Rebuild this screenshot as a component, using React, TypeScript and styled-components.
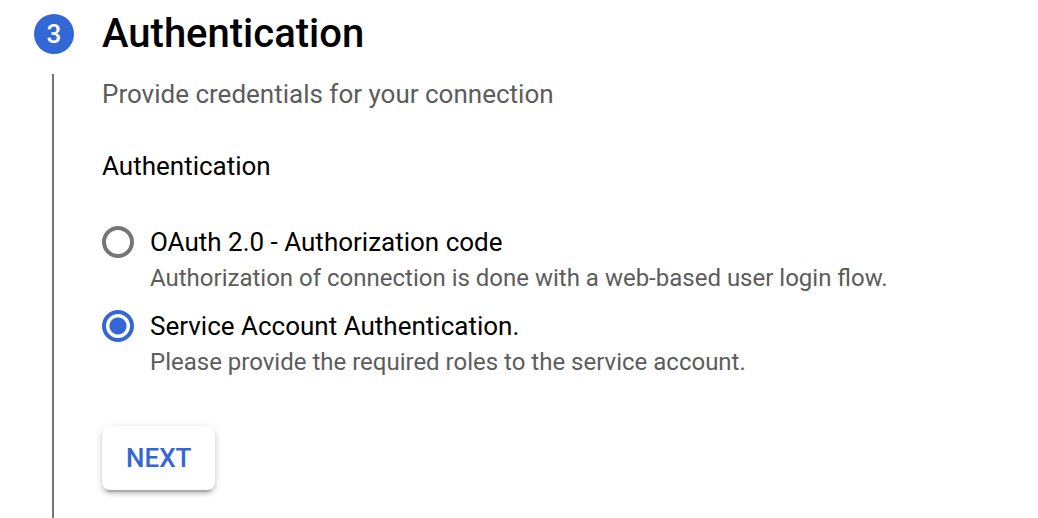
import React from "react";
import styled, { createGlobalStyle } from "styled-components";

const Global = createGlobalStyle`
  * { box-sizing: border-box; }
  body { margin: 0; background: #fff; font-family: Roboto, "Liberation Sans", sans-serif; }
  h2, p, fieldset, legend { margin: 0; padding: 0; border: 0; }
`;

const Step = styled.section`
  display: flex;
  gap: 28px;
  min-height: 100vh;
  padding: 0 34px;
`;

const Rail = styled.div`
  display: flex;
  flex-direction: column;
  align-items: center;
  width: 40px;
  flex: none;
  padding-top: 14px;
`;

const StepNumber = styled.span`
  display: flex;
  align-items: center;
  justify-content: center;
  width: 40px;
  height: 40px;
  flex: none;
  border-radius: 50%;
  background: #3367d6;
  color: #fff;
  font-size: 26px;
  line-height: 32px;
  font-weight: 500;
`;

const Line = styled.div`
  flex: 1;
  width: 2px;
  margin: 20px 2px 0 0;
  background: #757575;
`;

const Content = styled.div`
  flex: 1;
  min-width: 0;
  padding: 10px 0 28px;
`;

const Title = styled.h2`
  font-size: 40px;
  line-height: 48px;
  font-weight: 500;
  color: #000;
`;

const Description = styled.p`
  margin-top: 20px;
  font-size: 26px;
  line-height: 32px;
  color: #5c5c5c;
`;

const Group = styled.fieldset`
  margin-top: 40px;
`;

const Legend = styled.legend`
  font-size: 26px;
  line-height: 32px;
  color: #000;
`;

const Options = styled.div`
  display: flex;
  flex-direction: column;
  gap: 16px;
  margin-top: 44px;
`;

const Option = styled.label`
  display: flex;
  align-items: flex-start;
  gap: 16px;
  cursor: pointer;
`;

const Radio = styled.input`
  appearance: none;
  width: 32px;
  height: 32px;
  flex: none;
  margin: 0;
  border: 4px solid #757575;
  border-radius: 50%;
  background: #fff;
  &:checked {
    border-color: #3367d6;
    background: radial-gradient(circle, #3367d6 8px, #fff 9px);
  }
`;

const OptionText = styled.span`
  display: flex;
  flex-direction: column;
  gap: 4px;
`;

const OptionName = styled.span`
  font-size: 26px;
  line-height: 32px;
  color: #000;
`;

const OptionHint = styled.span`
  font-size: 24px;
  line-height: 32px;
  color: #5c5c5c;
`;

const NextButton = styled.button`
  margin-top: 48px;
  height: 64px;
  padding: 0 24px;
  border: 0;
  border-radius: 8px;
  background: #fff;
  color: #3367d6;
  font: 500 26px/32px Roboto, "Liberation Sans", sans-serif;
  box-shadow: 0 6px 2px -4px rgba(0, 0, 0, 0.2), 0 4px 4px rgba(0, 0, 0, 0.14),
    0 2px 10px rgba(0, 0, 0, 0.12);
  cursor: pointer;
`;

const methods = [
  {
    id: "oauth",
    name: "OAuth 2.0 - Authorization code",
    hint: "Authorization of connection is done with a web-based user login flow.",
  },
  {
    id: "service",
    name: "Service Account Authentication.",
    hint: "Please provide the required roles to the service account.",
  },
];

export default function App() {
  return (
    <>
      <Global />
      <Step>
        <Rail>
          <StepNumber>3</StepNumber>
          <Line />
        </Rail>
        <Content>
          <Title>Authentication</Title>
          <Description>Provide credentials for your connection</Description>
          <Group>
            <Legend>Authentication</Legend>
            <Options>
              {methods.map((m) => (
                <Option key={m.id} htmlFor={m.id}>
                  <Radio type="radio" name="auth" id={m.id} defaultChecked={m.id === "service"} />
                  <OptionText>
                    <OptionName>{m.name}</OptionName>
                    <OptionHint>{m.hint}</OptionHint>
                  </OptionText>
                </Option>
              ))}
            </Options>
          </Group>
          <NextButton type="button">NEXT</NextButton>
        </Content>
      </Step>
    </>
  );
}
